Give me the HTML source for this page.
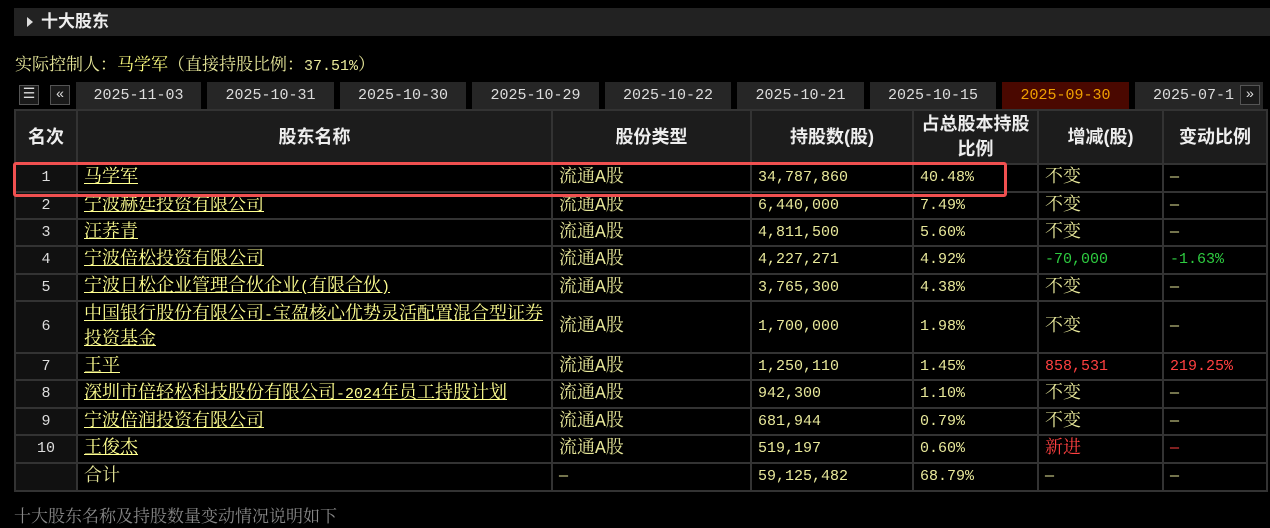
<!DOCTYPE html>
<html><head><meta charset="utf-8"><style>
body{margin:0;background:#000;width:1270px;height:511px;overflow:hidden;font-family:"Liberation Mono","Noto Serif CJK SC",monospace;color:#e8e89a;font-size:15px;position:relative}
.hdr{position:absolute;left:14px;top:8px;width:1256px;height:28px;background:#222;color:#eee;font-family:"Liberation Sans","Noto Sans CJK SC",sans-serif;font-weight:bold;font-size:17px;line-height:28px}
.hdr .tri{position:absolute;left:13px;top:9px;width:0;height:0;border-left:6px solid #ddd;border-top:5px solid transparent;border-bottom:5px solid transparent}
.hdr span{position:absolute;left:27px}
.sub{position:absolute;left:15px;top:50px;font-size:17px;color:#e8e89a}
.sub b{font-weight:normal;color:#ffff80}
.sub i{font-style:normal;font-size:15px}
.tabs{position:absolute;top:82px;left:14px;width:1256px;height:27px}
.tab{position:absolute;top:0;height:27px;background:#262626;color:#ddd;text-align:center;line-height:27px;font-size:15px}
.tab.sel{background:#4a0800;color:#f0a000}
.ic{position:absolute;top:3px;width:18px;height:18px;background:#1a1a1a;border:1px solid #555;color:#ddd;font-size:14px;line-height:18px;text-align:center}
table{position:absolute;left:14px;top:109px;border-collapse:collapse;width:1252px;table-layout:fixed}
td,th{border:2px solid #333;padding:0 0 0 6px;text-align:left;white-space:nowrap;font-weight:normal;line-height:18px;font-size:18px;overflow:hidden;vertical-align:middle}
th{background:#1c1c1c;color:#eee;font-weight:bold;text-align:center;font-family:"Liberation Sans","Noto Sans CJK SC",sans-serif;font-size:18px;line-height:25px;padding:0}
td.n{background:#111;text-align:center;color:#ddd;padding:0;font-size:15px}
td.d,span.d{font-size:15px}
td u{color:#ffff90}
.g{color:#2ecc40}.r{color:#ff4040}
.box{position:absolute;left:13px;top:162px;width:988px;height:29px;border:3px solid #f05050;border-radius:3px}
.foot{position:absolute;left:14px;top:502px;color:#888;font-size:17px}
</style></head><body>
<div class="hdr"><div class="tri"></div><span>十大股东</span></div>
<div class="sub">实际控制人：<b>马学军</b>（直接持股比例：<i>37.51%</i>）</div>
<div class="tabs">
<div class="ic" style="left:5px">☰</div><div class="ic" style="left:36px">«</div>
<div class="tab" style="left:62px;width:125px">2025-11-03</div>
<div class="tab" style="left:193px;width:127px">2025-10-31</div>
<div class="tab" style="left:326px;width:126px">2025-10-30</div>
<div class="tab" style="left:458px;width:127px">2025-10-29</div>
<div class="tab" style="left:591px;width:126px">2025-10-22</div>
<div class="tab" style="left:723px;width:127px">2025-10-21</div>
<div class="tab" style="left:856px;width:126px">2025-10-15</div>
<div class="tab sel" style="left:988px;width:127px">2025-09-30</div>
<div class="tab" style="left:1121px;width:110px;text-align:left;padding-left:18px">2025-07-1</div>
<div class="ic" style="left:1226px">»</div>
</div>
<table>
<colgroup><col style="width:62px"><col style="width:475px"><col style="width:199px"><col style="width:162px"><col style="width:125px"><col style="width:125px"><col style="width:104px"></colgroup>
<tr style="height:54px"><th>名次</th><th>股东名称</th><th>股份类型</th><th>持股数(股)</th><th>占总股本持股<br>比例</th><th>增减(股)</th><th>变动比例</th></tr>
<tr style="height:28px"><td class="n">1</td><td><u>马学军</u></td><td>流通A股</td><td class="d">34,787,860</td><td class="d">40.48%</td><td>不变</td><td class="d">—</td></tr>
<tr style="height:27px"><td class="n">2</td><td><u>宁波赫廷投资有限公司</u></td><td>流通A股</td><td class="d">6,440,000</td><td class="d">7.49%</td><td>不变</td><td class="d">—</td></tr>
<tr style="height:27px"><td class="n">3</td><td><u>汪荞青</u></td><td>流通A股</td><td class="d">4,811,500</td><td class="d">5.60%</td><td>不变</td><td class="d">—</td></tr>
<tr style="height:28px"><td class="n">4</td><td><u>宁波倍松投资有限公司</u></td><td>流通A股</td><td class="d">4,227,271</td><td class="d">4.92%</td><td class="g d">-70,000</td><td class="g d">-1.63%</td></tr>
<tr style="height:27px"><td class="n">5</td><td><u>宁波日松企业管理合伙企业<span class="d">(</span>有限合伙<span class="d">)</span></u></td><td>流通A股</td><td class="d">3,765,300</td><td class="d">4.38%</td><td>不变</td><td class="d">—</td></tr>
<tr style="height:52px"><td class="n">6</td><td style="line-height:24px"><u>中国银行股份有限公司<span class="d">-</span>宝盈核心优势灵活配置混合型证券<br>投资基金</u></td><td>流通A股</td><td class="d">1,700,000</td><td class="d">1.98%</td><td>不变</td><td class="d">—</td></tr>
<tr style="height:27px"><td class="n">7</td><td><u>王平</u></td><td>流通A股</td><td class="d">1,250,110</td><td class="d">1.45%</td><td class="r d">858,531</td><td class="r d">219.25%</td></tr>
<tr style="height:28px"><td class="n">8</td><td><u>深圳市倍轻松科技股份有限公司<span class="d">-2024</span>年员工持股计划</u></td><td>流通A股</td><td class="d">942,300</td><td class="d">1.10%</td><td>不变</td><td class="d">—</td></tr>
<tr style="height:27px"><td class="n">9</td><td><u>宁波倍润投资有限公司</u></td><td>流通A股</td><td class="d">681,944</td><td class="d">0.79%</td><td>不变</td><td class="d">—</td></tr>
<tr style="height:28px"><td class="n">10</td><td><u>王俊杰</u></td><td>流通A股</td><td class="d">519,197</td><td class="d">0.60%</td><td class="r">新进</td><td class="r d">—</td></tr>
<tr style="height:28px"><td class="n"></td><td>合计</td><td class="d">—</td><td class="d">59,125,482</td><td class="d">68.79%</td><td class="d">—</td><td class="d">—</td></tr>
</table>
<div class="box"></div>
<div class="foot">十大股东名称及持股数量变动情况说明如下</div>
</body></html>
